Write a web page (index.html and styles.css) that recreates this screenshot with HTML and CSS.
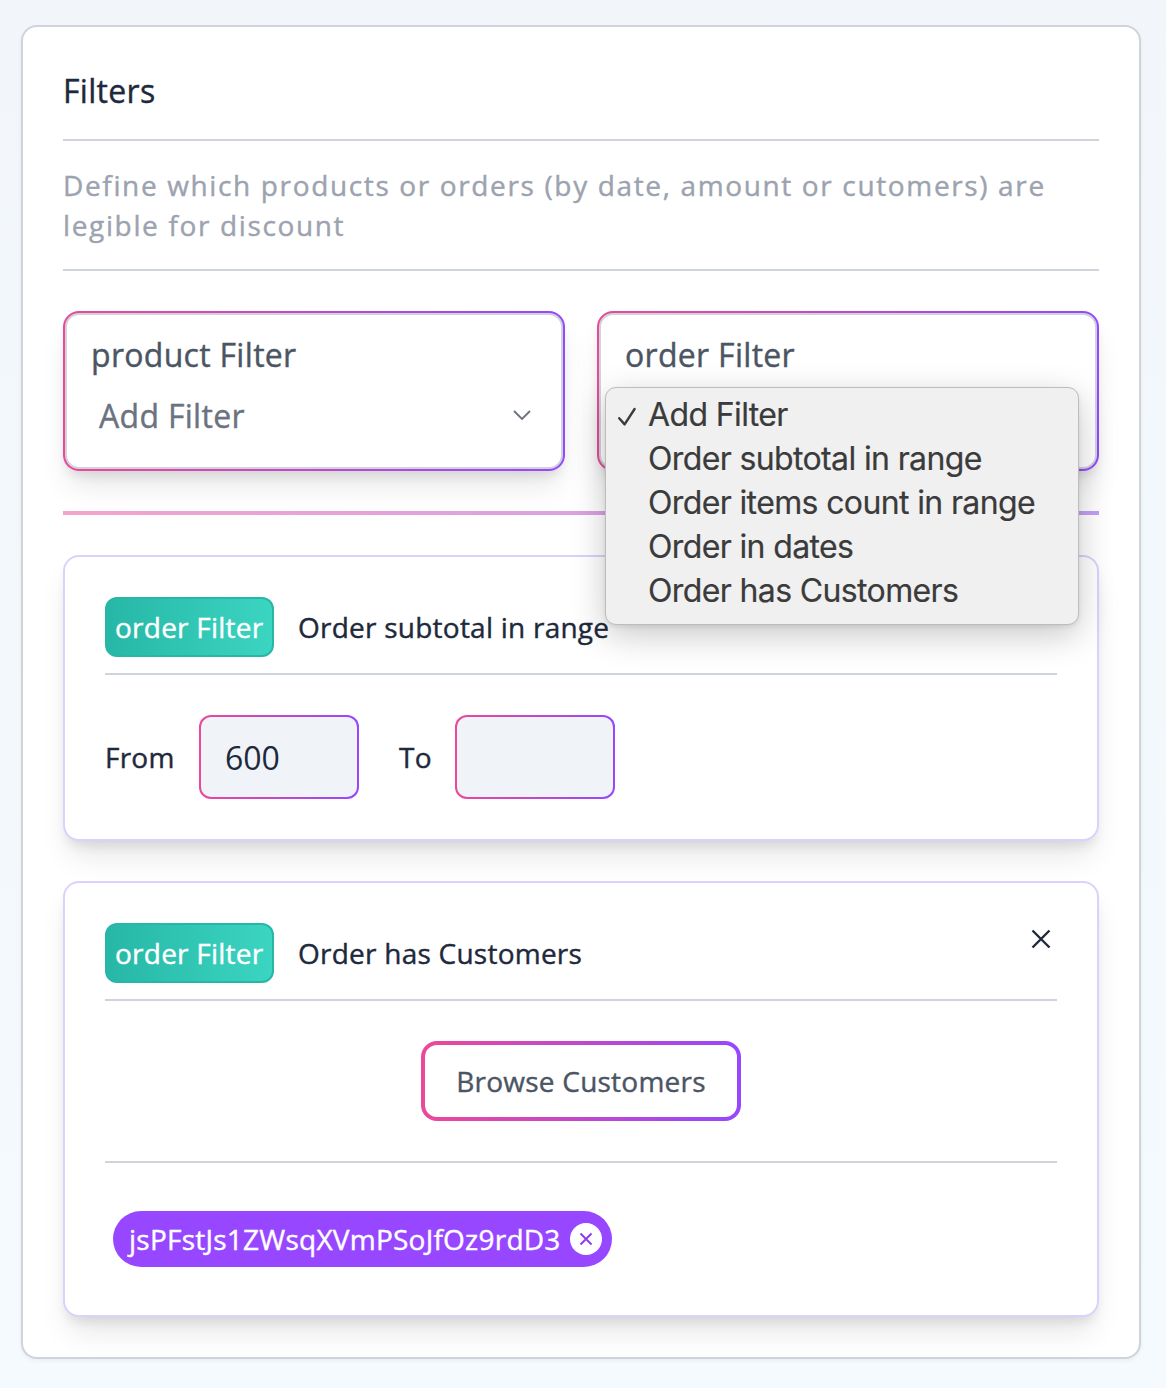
FILE: index.html
```html
<!DOCTYPE html>
<html lang="en">
<head>
<meta charset="utf-8">
<title>Filters</title>
<link rel="stylesheet" href="styles.css">
</head>
<body>
<main class="panel">
  <h1 class="panel-title">Filters</h1>
  <p class="panel-desc">Define which products or orders (by date, amount or cutomers) are<br>legible for discount</p>
  <div class="pickers">
    <section class="picker">
      <div class="picker-inner">
        <div class="picker-label">product Filter</div>
        <div class="picker-select"><span>Add Filter</span>
          <svg class="chevron" viewBox="0 0 20 12"><path d="M2 2l8 8 8-8"/></svg>
        </div>
      </div>
    </section>
    <section class="picker">
      <div class="picker-inner">
        <div class="picker-label">order Filter</div>
      </div>
      <ul class="menu">
        <li><svg class="check" viewBox="0 0 20 20"><path d="M2.2 11.2L7.6 17.4 17.6 2"/></svg>Add Filter</li>
        <li>Order subtotal in range</li>
        <li>Order items count in range</li>
        <li>Order in dates</li>
        <li>Order has Customers</li>
      </ul>
    </section>
  </div>
  <div class="rainbow"></div>
  <section class="card">
    <header class="card-head">
      <span class="badge">order Filter</span>
      <h2 class="card-title">Order subtotal in range</h2>
    </header>
    <div class="range">
      <label class="from">From</label><div class="field">600</div>
      <label class="to">To</label><div class="field"></div>
    </div>
  </section>
  <section class="card">
    <header class="card-head">
      <span class="badge">order Filter</span>
      <h2 class="card-title">Order has Customers</h2>
      <svg class="close" viewBox="0 0 20 20"><path d="M1.5 1.5l17 17M18.5 1.5l-17 17"/></svg>
    </header>
    <div class="browse"><div class="browse-btn">Browse Customers</div></div>
    <div class="chips">
      <div class="chip"><span class="chip-text">jsPFstJs1ZWsqXVmPSoJfOz9rdD3</span>
        <svg class="chip-x" viewBox="0 0 32 32"><circle cx="16" cy="16" r="16"/><path d="M10.5 10.5l11 11M21.5 10.5l-11 11"/></svg>
      </div>
    </div>
  </section>
</main>
</body>
</html>
```
FILE: styles.css
```css
* { box-sizing: border-box; }
body {
  margin: 0;
  min-height: 1388px;
  padding: 25px 25px 29px 21px;
  background: linear-gradient(180deg, #f2f6fa, #f4fafd);
  font-family: "Open Sans", "Noto Sans", sans-serif;
  font-size: 28px;
  letter-spacing: .24px;
  -webkit-text-stroke: .4px currentColor;
  color: #1e293b;
  white-space: nowrap;
}
h1, h2, p, ul { margin: 0; padding: 0; font-weight: 400; list-style: none; }
.panel {
  height: 1334px;
  padding: 40px;
  background: #fff;
  border: 2px solid #cfd3da;
  border-radius: 16px;
  box-shadow: 0 2px 4px rgba(0, 0, 0, .05);
}
.panel-title {
  height: 74px;
  line-height: 48px;
  font-size: 32px;
  letter-spacing: .3px;
  border-bottom: 2px solid #cfd3da;
}
.panel-desc {
  height: 130px;
  padding-top: 24px;
  line-height: 40px;
  letter-spacing: 1.64px;
  color: #9ca3af;
  border-bottom: 2px solid #cfd3da;
}
.pickers { display: grid; grid-template-columns: 1fr 1fr; gap: 32px; margin-top: 40px; }
.picker {
  position: relative;
  height: 160px;
  padding: 2px;
  border-radius: 16px;
  background: linear-gradient(90deg, #ec4899, #9747ff);
  box-shadow: 0 20px 30px -6px rgba(0, 0, 0, .1), 0 8px 12px -4px rgba(0, 0, 0, .1);
}
.picker-inner {
  height: 156px;
  padding: 16px 24px;
  border: 2px solid #cfd3da;
  border-radius: 14px;
  background: #fff;
  font-size: 32px;
  letter-spacing: .3px;
  color: #4b5563;
}
.picker-label { line-height: 48px; }
.picker-select {
  display: flex;
  align-items: center;
  justify-content: space-between;
  height: 48px;
  margin-top: 12px;
  padding: 0 5px 0 8px;
  color: #6b7280;
}
.chevron { width: 20px; height: 12px; fill: none; stroke: #6b7280; stroke-width: 1.9; }
.menu {
  position: absolute;
  z-index: 2;
  left: 8px;
  top: 76px;
  width: 474px;
  height: 238px;
  padding: 5px 0;
  background: #f0f0f1;
  border: 1px solid #bdbdbd;
  border-radius: 11px;
  box-shadow: 0 10px 34px rgba(0, 0, 0, .22), 0 2px 4px rgba(0, 0, 0, .08);
  font: 32px/44px Inter, sans-serif;
  letter-spacing: -.63px;
  -webkit-text-stroke: .2px currentColor;
  color: #3b3b3b;
}
.menu li { position: relative; padding-left: 42px; height: 44px; }
.check { position: absolute; left: 11px; top: 14px; width: 20px; height: 20px; fill: none; stroke: #3b3b3b; stroke-width: 2.4; stroke-linecap: round; stroke-linejoin: round; }
.rainbow { height: 4px; margin: 40px 0; background: linear-gradient(90deg, #f3a4cb, #c39ff8); }
.card {
  padding: 40px;
  border: 2px solid #ddd0fd;
  border-radius: 16px;
  background: #fff;
  box-shadow: 0 20px 30px -6px rgba(0, 0, 0, .1), 0 8px 12px -4px rgba(0, 0, 0, .1);
}
.card + .card { margin-top: 40px; }
.card-head { display: flex; height: 78px; border-bottom: 2px solid #cfd3da; }
.badge {
  width: 169px;
  height: 60px;
  padding: 0 8px;
  line-height: 56px;
  border: 2px solid #27b7a7;
  border-radius: 12px;
  background: linear-gradient(90deg, #27b7a7, #3bd5c1);
  color: #fff;
}
.card-title { margin-left: 24px; line-height: 60px; font-size: 28px; }
.close { width: 20px; height: 20px; margin: 6px 6px 0 auto; fill: none; stroke: #1e293b; stroke-width: 2.4; }
.range { display: flex; align-items: center; margin-top: 40px; height: 84px; }
.from { width: 94px; }
.to { width: 56px; margin-left: 40px; }
.field {
  width: 160px;
  height: 84px;
  padding-left: 24px;
  line-height: 82px;
  font-size: 32px;
  letter-spacing: 0;
  -webkit-text-stroke: 0;
  border: 2px solid transparent;
  border-radius: 12px;
  background: linear-gradient(#f0f4f9, #f0f4f9) padding-box, linear-gradient(90deg, #ec4899, #9747ff) border-box;
}
.browse { display: flex; justify-content: center; height: 162px; padding-top: 40px; border-bottom: 2px solid #cfd3da; }
.browse-btn {
  width: 320px;
  height: 80px;
  line-height: 72px;
  text-align: center;
  color: #4b5563;
  border: 4px solid transparent;
  border-radius: 16px;
  background: linear-gradient(#fff, #fff) padding-box, linear-gradient(90deg, #ec4899, #9747ff) border-box;
}
.chips { display: flex; padding: 48px 8px 8px; }
.chip {
  display: flex;
  align-items: center;
  justify-content: space-between;
  width: 499px;
  height: 56px;
  padding: 0 10px 0 16px;
  border-radius: 28px;
  background: #9747ff;
  color: #fff;
}
.chip-x { width: 32px; height: 32px; fill: #fff; stroke: none; }
.chip-x path { stroke: #8b3ff0; stroke-width: 2; }
```
